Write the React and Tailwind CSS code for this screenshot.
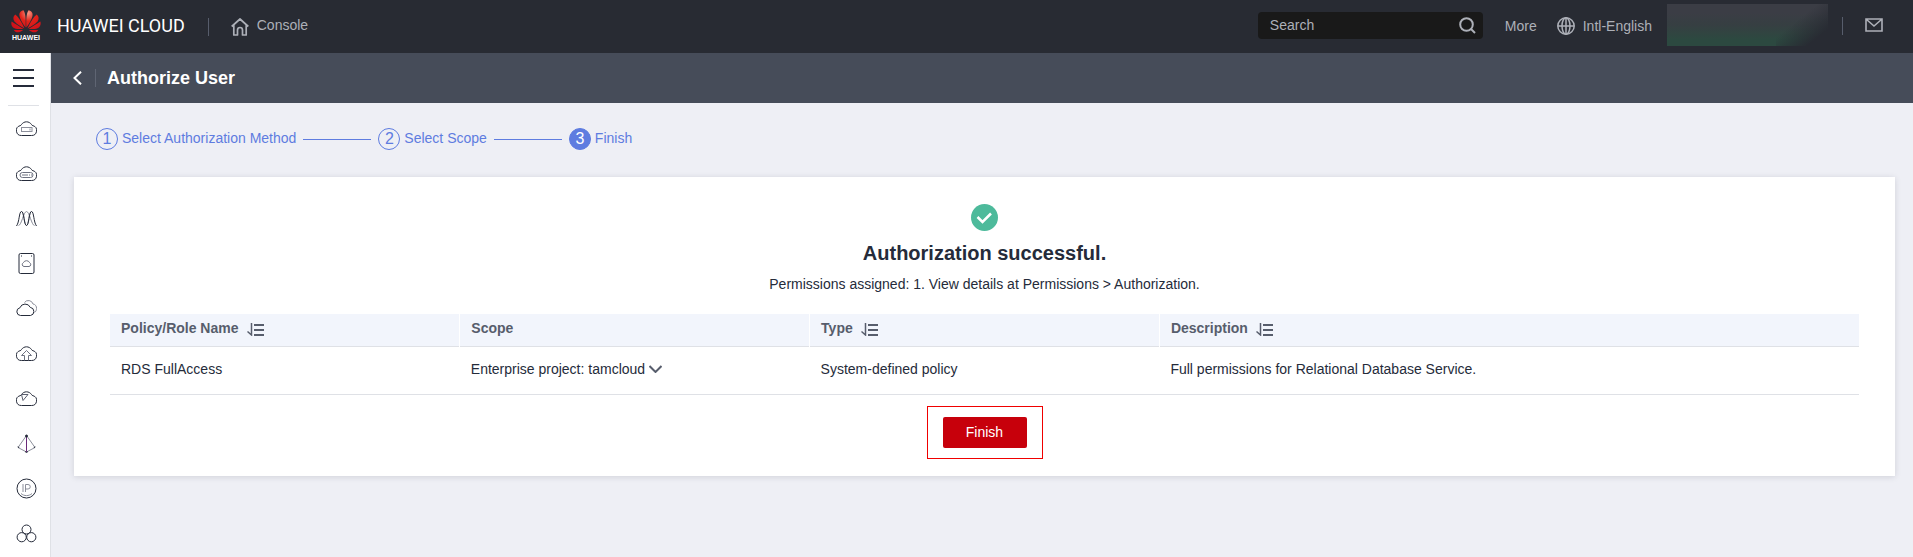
import { useState } from "react";

const columns = [
  { key: "name", label: "Policy/Role Name", width: "w-1/5", sortable: true },
  { key: "scope", label: "Scope", width: "w-1/5", sortable: false },
  { key: "type", label: "Type", width: "w-1/5", sortable: true },
  { key: "description", label: "Description", width: "w-2/5", sortable: true },
];

const steps = ["Select Authorization Method", "Select Scope", "Finish"];

const cloudPath = "M5.500 17.500A5 5 0 0 1 4 7.700C4.800 7.500 5 7.300 5.500 6.500a6 6 0 0 1 10 0C16 7.300 16.200 7.500 17 7.700a5 5 0 0 1-1.500 9.800z";

const services = [
  {
    name: "Elastic Cloud Server",
    icon: (
      <>
        <path d={cloudPath} />
        <g stroke="#8c8f9b">
          <rect x="5.500" y="9.500" width="10.500" height="4" />
          <path d="M14 10.500v2" />
        </g>
      </>
    ),
  },
  {
    name: "Bare Metal Server",
    icon: (
      <>
        <path d={cloudPath} />
        <g stroke="#6e7281">
          <rect x="4" y="9.500" width="13" height="5" rx="2.500" />
          <path d="M6 12h6M13 12h1M15 12h1" />
        </g>
      </>
    ),
  },
  {
    name: "Auto Scaling",
    icon: (
      <>
        <path stroke="#8c8f9b" d="M2.500 17.500C5.500 17.500 7.500 3.500 10.500 3.500s5 14 8 14M5.500 3.500c3 0 2.500 14 5 14s2-14 5-14" />
        <path d="M.5 18C3.500 14 3 3.500 5.500 3.500s2.500 14 5 14 2.500-14 5-14 2 10.500 5 14.500" />
      </>
    ),
  },
  {
    name: "Elastic Volume Service",
    icon: (
      <>
        <rect x="3" y=".5" width="15" height="20" rx="1.500" />
        <path d="M5 3h1M15 3h1" />
        <path stroke="#6e7281" d="M8 13.500a2 2 0 0 1-.6-3.800 3.400 3.400 0 0 1 6.200 0 2 2 0 0 1-.6 3.800z" />
      </>
    ),
  },
  {
    name: "Volume Backup",
    icon: (
      <>
        <path stroke="#8c8f9b" d="M8.500 4.500a4.800 4.800 0 0 1 8.500 1.500 4 4 0 0 1 3.500 4.500c0 1.800-.7 3.200-2 4" />
        <path d="M4.500 17.500a3.900 3.900 0 0 1-.6-7.700 5.600 5.600 0 0 1 10.400-.4 4.100 4.100 0 0 1 .2 8.100z" />
      </>
    ),
  },
  {
    name: "Object Storage",
    icon: (
      <>
        <path d={cloudPath} />
        <path stroke="#6e7281" d="M8.500 17.500v-5h-3l5-5 5 5h-3v5" />
      </>
    ),
  },
  {
    name: "Cloud Connect",
    icon: (
      <>
        <path d={cloudPath} />
        <path stroke="#5c6070" d="M5.500 6.500h6.500l-5 6z" />
      </>
    ),
  },
  {
    name: "Virtual Private Cloud",
    icon: (
      <>
        <path stroke="#8c8f9b" d="M10.500 2.500L2 14.500l8.500 4.500 8.500-4.500z" />
        <path stroke="#6a2a78" d="M10.500 2v17" />
        <circle cx="10.500" cy="3" r="1" fill="#252b3a" />
        <path d="M2 13.500l1 1.500M18 15l1-1.500M9 18.500l1.500 1 1.500-1" />
      </>
    ),
  },
  {
    name: "Elastic IP",
    icon: (
      <>
        <circle cx="10.500" cy="10.500" r="9.500" />
        <path stroke="#8c8f9b" d="M7 6v8M9.500 14V6.500h2.500a2 2 0 0 1 0 4.500H9.500M5 15.500c3 2.800 8 2.800 11 0" />
      </>
    ),
  },
  {
    name: "Cloud Container Engine",
    icon: (
      <>
        <circle cx="10.500" cy="6.500" r="4.500" />
        <circle cx="5.700" cy="14.200" r="4.600" />
        <circle cx="15.300" cy="14.200" r="4.600" />
      </>
    ),
  },
];

function HuaweiMark() {
  return (
    <svg className="h-[23px] w-[30px]" viewBox="0 0 30 23" aria-hidden="true">
      <defs>
        <radialGradient id="petal" gradientUnits="userSpaceOnUse" cx="17" cy="3" r="18">
          <stop offset="0" stopColor="#f79a86" />
          <stop offset=".45" stopColor="#e2231a" />
          <stop offset="1" stopColor="#d0121a" />
        </radialGradient>
      </defs>
      <g fill="url(#petal)">
        <path d="M14.600 17.500C15 9 14.500 3 12.500.2 9.500.6 7.800 3 8.500 6c.7 3.500 3.500 8 6.100 11.500z" />
        <path d="M15.400 17.500C15 9 15.500 3 17.500.2c3 .4 4.700 2.800 4 5.800-.7 3.500-3.500 8-6.100 11.500z" />
        <path d="M13.400 18.200C10.500 12 7.500 7 4.300 4.500 2 6.500 1.800 9 3.400 11.300c2 2.700 6 5.200 10 6.900z" />
        <path d="M16.600 18.200C19.500 12 22.500 7 25.700 4.500c2.300 2 2.500 4.500.9 6.800-2 2.700-6 5.200-10 6.900z" />
        <path d="M12.600 19C8 16.500 4 13.500.6 11.500-.2 14.500.8 17 3.500 18.200c2.500 1 6 1 9.100.8z" />
        <path d="M17.400 19c4.600-2.500 8.600-5.500 12-7.500.8 3-.2 5.500-2.900 6.700-2.500 1-6 1-9.100.8z" />
        <path d="M12.200 19.900H2.800c1.700 2.800 5.200 3.300 9.400 0z" />
        <path d="M17.800 19.900h9.400c-1.700 2.800-5.200 3.300-9.400 0z" />
      </g>
    </svg>
  );
}

function SortIcon() {
  return (
    <svg className="h-[13px] w-[17px]" viewBox="0 0 17 13" fill="none" stroke="#575d6c" strokeWidth="2" aria-hidden="true">
      <path d="M4.500 0v12L.5 8.500" strokeWidth="1.500" />
      <path d="M7 2h10M7 7h10M7 12h10" />
    </svg>
  );
}

function Header() {
  return (
    <header className="flex h-[53px] items-center bg-[#282b33] text-sm text-[#adb0b8]">
      <a href="#" className="flex items-center">
        <span className="ml-[10px] flex w-8 flex-col items-center pb-[2px]">
          <HuaweiMark />
          <span className="text-[7px] leading-[9px] font-bold text-white">HUAWEI</span>
        </span>
        <span className="ml-[15px] pb-[2px] font-[Roboto] text-lg leading-6 text-white">HUAWEI CLOUD</span>
      </a>
      <span className="ml-[23px] h-[18px] w-px bg-[#575d6c]" />
      <a href="#" className="ml-[22px] flex items-center gap-2">
        <svg className="h-[18px] w-[18px]" viewBox="0 0 18 18" fill="none" stroke="currentColor" strokeWidth="1.700" aria-hidden="true">
          <path d="M.7 8.500L9 1l8.300 7.500M2.800 7v10h3.700v-5a2.500 2.500 0 0 1 5 0v5h3.700V7" strokeLinejoin="round" />
        </svg>
        <span className="pb-[3px]">Console</span>
      </a>

      <form className="mb-[2px] ml-auto flex h-[27px] w-[225px] items-center rounded-sm bg-[#191919] pr-[7px] pl-3">
        <input
          type="search"
          aria-label="Search"
          placeholder="Search"
          className="min-w-0 flex-1 bg-transparent pb-[2px] outline-none placeholder:text-[#adb0b8]"
        />
        <button type="submit" aria-label="Submit search">
          <svg className="h-[17px] w-[17px]" viewBox="0 0 17 17" fill="none" stroke="currentColor" strokeWidth="2" aria-hidden="true">
            <circle cx="7.500" cy="7.500" r="6.300" />
            <path d="M12 12l4 4" />
          </svg>
        </button>
      </form>
      <a href="#" className="ml-[22px] pb-[2px]">More</a>
      <a href="#" className="ml-5 flex items-center gap-2 pb-[2px]">
        <svg className="h-[18px] w-[18px]" viewBox="0 0 18 18" fill="none" stroke="currentColor" strokeWidth="1.500" aria-hidden="true">
          <circle cx="9" cy="9" r="8.200" />
          <ellipse cx="9" cy="9" rx="4" ry="8.200" />
          <path d="M9 1v16M1 9h16" />
        </svg>
        Intl-English
      </a>
      {/* Masked account name */}
      <div className="mb-[3px] ml-[15px] flex h-[42px] w-[161px] bg-linear-to-b from-[#3b3d45] from-20% via-[#363f42] via-50% to-[#2c4940] to-85%">
        <div className="ml-auto w-[52px] bg-linear-to-br from-transparent from-40% to-[#282b33] to-80%" />
      </div>
      <span className="mb-[2px] ml-[14px] h-[18px] w-px bg-[#575d6c]" />
      <button type="button" aria-label="Messages" className="mr-[30px] mb-[3px] ml-[22px]">
        <svg className="h-[14px] w-[18px]" viewBox="0 0 18 14" fill="none" stroke="currentColor" strokeWidth="1.600" aria-hidden="true">
          <path d="M1 1h16v12H1zM1.500 1.500L9 8l7.500-6.500" />
        </svg>
      </button>
    </header>
  );
}

function Sidebar() {
  return (
    <nav className="flex w-[51px] shrink-0 flex-col items-center border-r border-[#dfe1e6] bg-white" aria-label="Services">
      <button type="button" aria-label="Open menu" className="mt-4 mr-1 flex flex-col gap-[6px]">
        <span className="h-[2px] w-[21px] bg-[#252b3a]" />
        <span className="h-[2px] w-[21px] bg-[#252b3a]" />
        <span className="h-[2px] w-[21px] bg-[#252b3a]" />
      </button>
      <span className="mt-[18px] mr-[3px] h-px w-[31px] bg-[#dfe1e6]" />
      <ul>
        {services.map((service) => (
          <li key={service.name} className="flex h-[45px] items-center pl-[3px]">
            <a href="#" aria-label={service.name}>
              <svg className="h-[21px] w-[21px]" viewBox="0 0 21 21" fill="none" stroke="#252b3a">
                {service.icon}
              </svg>
            </a>
          </li>
        ))}
      </ul>
    </nav>
  );
}

function Steps({ current }) {
  return (
    <ol className="flex h-[22px] items-center text-sm text-[#5e7ce0]">
      {steps.map((label, i) => (
        <li key={label} className="flex items-center">
          {i > 0 && <span className="mx-[7px] h-px w-[68px] bg-[#5e7ce0]" />}
          <span
            className={`flex h-[22px] w-[22px] items-center justify-center rounded-full border border-[#5e7ce0] text-base leading-5 ${
              i + 1 === current ? "bg-[#5e7ce0] text-white" : ""
            }`}
          >
            {i + 1}
          </span>
          <span className="ml-1 pb-[2px]">{label}</span>
        </li>
      ))}
    </ol>
  );
}

function ResultTable() {
  const [isOpen, setIsOpen] = useState(false);

  return (
    <table className="w-full table-fixed border-collapse text-left text-sm">
      <thead>
        <tr className="h-8 border-b border-[#dfe1e6] bg-[#f2f5fc] text-[#575d6c]">
          {columns.map((column) => (
            <th key={column.key} className={`${column.width} border-l border-white px-[11px] font-bold first:border-l-0`}>
              <span className="flex items-center gap-2">
                <span className="pb-1">{column.label}</span>
                {column.sortable && (
                  <button type="button" aria-label={`Sort by ${column.label}`}>
                    <SortIcon />
                  </button>
                )}
              </span>
            </th>
          ))}
        </tr>
      </thead>
      <tbody>
        <tr className="h-12 border-b border-[#dfe1e6]">
          <td className="pb-[3px] pl-[11px]">RDS FullAccess</td>
          <td className="pb-[3px] pl-[11px]">
            <button type="button" aria-expanded={isOpen} onClick={() => setIsOpen(!isOpen)} className="flex items-center gap-1">
              Enterprise project: tamcloud
              <svg className="h-2 w-[13px]" viewBox="0 0 13 8" fill="none" stroke="#575d6c" strokeWidth="2" aria-hidden="true">
                <path d="M.5 1l6 6 6-6" />
              </svg>
            </button>
          </td>
          <td className="pb-[3px] pl-[11px]">System-defined policy</td>
          <td className="pb-[3px] pl-[11px]">Full permissions for Relational Database Service.</td>
        </tr>
      </tbody>
    </table>
  );
}

function App() {
  return (
    <div className="flex min-h-screen flex-col bg-[#eeeff5] font-['Liberation_Sans',Arial,sans-serif] text-[#252b3a]">
      <Header />
      <div className="flex flex-1">
        <Sidebar />
        <div className="min-w-0 flex-1">
          <div className="flex h-[50px] items-center bg-[#464c59] pl-[22px] text-white">
            <a href="#" aria-label="Back">
              <svg className="h-[14px] w-[9px]" viewBox="0 0 9 14" fill="none" stroke="currentColor" strokeWidth="2" aria-hidden="true">
                <path d="M8 .7L1.500 7 8 13.300" />
              </svg>
            </a>
            <span className="ml-[13px] h-[18px] w-px bg-[#5f6573]" />
            <h1 className="ml-[11px] text-lg font-bold">Authorize User</h1>
          </div>

          <main className="pt-[25px] pr-[18px] pl-[23px]">
            <div className="pl-[22px]">
              <Steps current={3} />
            </div>
            <section className="mt-[27px] flex flex-col items-center bg-white px-9 pt-[27px] pb-[17px] shadow-[0_1px_6px_rgba(37,43,58,0.15)]">
              <svg className="h-[27px] w-[27px]" viewBox="0 0 27 27" aria-hidden="true">
                <circle cx="13.500" cy="13.500" r="13.500" fill="#4dba9b" />
                <path d="M6.500 13l5 5 8.500-8.500" fill="none" stroke="#fff" strokeWidth="2.500" />
              </svg>
              <h2 className="mt-2 text-xl leading-7 font-bold">Authorization successful.</h2>
              <p className="mt-[7px] mb-5 text-sm">Permissions assigned: 1. View details at Permissions &gt; Authorization.</p>
              <ResultTable />
              <div className="mt-[11px] border border-[#f00000] px-[15px] py-[10px]">
                <button type="button" className="h-[31px] w-[84px] rounded-xs bg-[#c7000b] text-sm text-white">
                  Finish
                </button>
              </div>
            </section>
          </main>
        </div>
      </div>
    </div>
  );
}

export default App;
